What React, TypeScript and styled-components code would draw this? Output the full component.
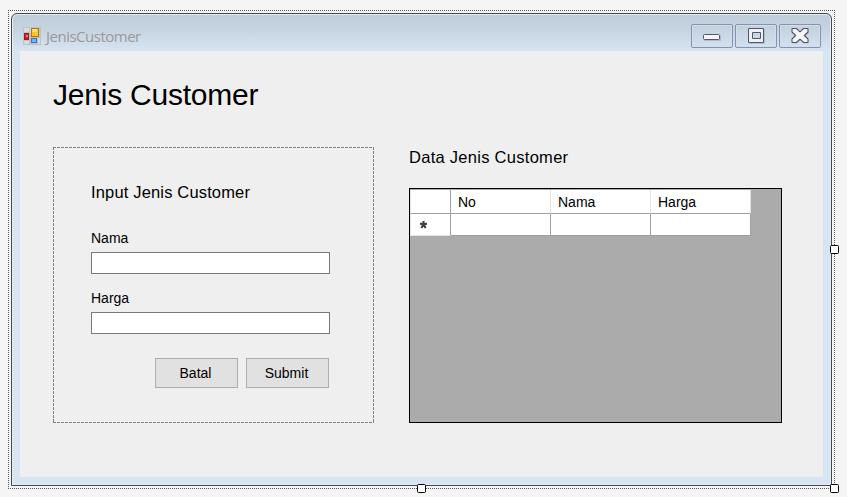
import React from 'react';
import styled, { createGlobalStyle } from 'styled-components';

const GlobalStyle = createGlobalStyle`
  * { box-sizing: border-box; }
  html, body { margin: 0; padding: 0; background: #f5f5f5; overflow: hidden; }
  body { font-family: "Liberation Sans", Arial, sans-serif; color: #000; }
`;

const Canvas = styled.div`
  width: 847px;
  height: 497px;
  padding: 10px 0 0 8px;
  background: #f5f5f5;
`;

const Selection = styled.div`
  position: relative;
  width: 827px;
  height: 479px;
  padding: 2px;
  border: 1px dotted #555;
`;

const Handle = styled.i<{ $x: number; $y: number }>`
  position: absolute;
  left: ${(p) => p.$x}px;
  top: ${(p) => p.$y}px;
  width: 9px;
  height: 9px;
  border: 1px solid #000;
  border-radius: 1.5px;
  background: #fff;
`;

const Window = styled.section`
  display: flex;
  flex-direction: column;
  width: 821px;
  height: 473px;
  padding: 0 8px 8px;
  border: 1px solid #47484a;
  border-radius: 6px 6px 0 0;
  background: linear-gradient(#bfcddb 0, #c6d3e0 16px, #d7e4f2 37px, #d7e4f2 100%);
  box-shadow: inset 0 0 0 1px #e4edf6;
`;

const TitleBar = styled.header`
  display: flex;
  flex: none;
  height: 37px;
  padding-left: 3px;
`;

const AppIcon = styled.svg`
  flex: none;
  width: 18px;
  height: 18px;
  margin-top: 13px;
`;

const WindowTitle = styled.span`
  flex: 1;
  margin: 12px 0 0 5px;
  font: 15px/20px "Open Sans", "Noto Sans", sans-serif;
  letter-spacing: -0.5px;
  color: #999;
`;

const Controls = styled.div`
  display: flex;
  gap: 2px;
  margin: 10px 2px 0 0;
`;

const ControlButton = styled.button`
  display: flex;
  align-items: center;
  justify-content: center;
  width: 42px;
  height: 24px;
  padding: 0;
  border: 1px solid #8692b0;
  border-radius: 2px;
  background: transparent;
  box-shadow: inset 0 0 0 1px #d3deeb;
`;

const Content = styled.main`
  display: flex;
  flex-direction: column;
  height: 426px;
  padding: 26px 0 0 33px;
  background: #efefef;
`;

const Heading = styled.h1`
  margin: 0;
  height: 70px;
  font-size: 30px;
  line-height: 36px;
  font-weight: 400;
  letter-spacing: -0.22px;
`;

const Columns = styled.div`
  display: flex;
  gap: 35px;
`;

const Panel = styled.form`
  width: 321px;
  height: 276px;
  padding: 35px 44px 0 38px;
  background:
    repeating-linear-gradient(90deg, #808080 0 3px, transparent 3px 4px) 0 0 / 100% 1px no-repeat,
    repeating-linear-gradient(90deg, #808080 0 3px, transparent 3px 4px) 0 100% / 100% 1px no-repeat,
    repeating-linear-gradient(#808080 0 3px, transparent 3px 4px) 0 0 / 1px 100% no-repeat,
    repeating-linear-gradient(#808080 0 3px, transparent 3px 4px) 100% 0 / 1px 100% no-repeat;
`;

const Subheading = styled.h2<{ $tracking: number }>`
  margin: 0;
  padding-bottom: 2px;
  font-size: 16.5px;
  line-height: 20px;
  font-weight: 400;
  letter-spacing: ${(p) => p.$tracking}px;
`;

const Field = styled.label<{ $gap: number }>`
  display: block;
  margin-top: ${(p) => p.$gap}px;
  font-size: 14px;
  line-height: 18px;
`;

const TextInput = styled.input`
  display: block;
  width: 239px;
  height: 22px;
  margin-top: 5px;
  padding: 0 3px;
  border: 1px solid #7a7a7a;
  border-radius: 0;
  outline: none;
  background: #fff;
`;

const Actions = styled.div`
  display: flex;
  justify-content: flex-end;
  gap: 8px;
  margin: 24px 1px 0 0;
`;

const ActionButton = styled.button`
  width: 83px;
  height: 30px;
  padding: 0 2px 1px 0;
  border: 1px solid #adadad;
  background: #e1e1e1;
  font: 14px/18px "Liberation Sans", Arial, sans-serif;
  color: #000;
`;

const DataColumn = styled.div`
  width: 373px;
`;

const DataGrid = styled.div`
  height: 235px;
  margin-top: 19px;
  padding: 1px 0 0;
  border: 1px solid #000;
  background: #ababab;
`;

const Table = styled.table`
  width: 341px;
  table-layout: fixed;
  border-collapse: separate;
  border-spacing: 0;
  font-size: 14px;
`;

const HeaderCell = styled.th<{ $corner?: boolean }>`
  width: ${(p) => (p.$corner ? 41 : 100)}px;
  height: 24px;
  padding: 1px 0 0 7px;
  border: solid #a0a0a0;
  border-width: 0 1px 1px ${(p) => (p.$corner ? 1 : 0)}px;
  border-right-color: ${(p) => (p.$corner ? '#a0a0a0' : '#e3e3e3')};
  border-left-color: #e3e3e3;
  background: #fff;
  font-weight: 400;
  line-height: 16px;
  text-align: left;
`;

const Cell = styled.td<{ $marker?: boolean }>`
  height: 22px;
  padding: ${(p) => (p.$marker ? '0 0 0 8px' : '0')};
  border: solid #a0a0a0;
  border-width: 0 1px 1px ${(p) => (p.$marker ? 1 : 0)}px;
  border-left-color: #e3e3e3;
  border-bottom-color: ${(p) => (p.$marker ? '#e3e3e3' : '#a0a0a0')};
  background: #fff;
  line-height: 0;
`;

const FormIcon = () => (
  <AppIcon viewBox="0 0 18 18" shapeRendering="crispEdges">
    <path d="M0 0h18v18H0z" fill="#bfc1c4" />
    <path d="M1 1h5v4H1zM1 14h5v3H1zM7 1h1v5H7zM15 11h2v6h-2z" fill="#d5dce4" />
    <path d="M1 6h5v7H1z" fill="#a51610" />
    <path d="M2 7h3v5H2z" fill="#bf2620" />
    <path d="M3 8h2v2H3z" fill="#e88982" />
    <path d="M8 1h8v9H8z" fill="#aa7c13" />
    <path d="M9 2h6v7H9z" fill="#f5c62d" />
    <path d="M9 2h5v3H9z" fill="#ffdc68" />
    <path d="M8 11h6v5H8z" fill="#3c73c4" />
    <path d="M9 12h4v3H9z" fill="#79b0f2" />
  </AppIcon>
);

const MinimizeIcon = () => (
  <svg width="18" height="18" viewBox="0 0 18 18">
    <rect x="1" y="8" width="17" height="6" rx="1" fill="#8995a7" opacity=".5" />
    <rect x=".5" y="7.5" width="16" height="5" rx="1" fill="#f5f5f5" stroke="#53566b" />
  </svg>
);

const MaximizeIcon = () => (
  <svg width="18" height="18" viewBox="0 0 18 18">
    <path d="M2 2h16v15H2zM6 6v6h7V6z" fill="#8995a7" fillRule="evenodd" opacity=".4" />
    <path d="M1.500 1.500h15v14h-15zM5.500 5.500v6h8v-6z" fill="#f0f0f2" stroke="#53566b" fillRule="evenodd" strokeLinejoin="round" />
  </svg>
);

const CloseIcon = () => (
  <svg width="20" height="18" viewBox="0 0 20 18">
    <path d="M2.500 1.500h3.800L10 4.800l3.700-3.300h3.800l.5.500v3L14.300 8.500 18 12v3l-.5.500h-3.800L10 12.200l-3.700 3.300H2.500L2 15v-3l3.700-3.500L2 5V2z" transform="translate(.5 1)" fill="#8995a7" opacity=".5" />
    <path d="M2.500 1.500h3.800L10 4.800l3.700-3.300h3.800l.5.500v3L14.300 8.500 18 12v3l-.5.500h-3.800L10 12.200l-3.700 3.300H2.500L2 15v-3l3.700-3.500L2 5V2z" fill="#f5f5f5" stroke="#53566b" strokeWidth="1.1" strokeLinejoin="round" />
  </svg>
);

const NewRowMarker = () => (
  <svg width="9" height="9" viewBox="0 0 9 9">
    <path d="M4.500 1v4M1 3.500l3.500 1L8 3.500M2.300 8l2.200-3.500L6.700 8" fill="none" stroke="#404040" strokeWidth="2.2" />
  </svg>
);

const columns = ['No', 'Nama', 'Harga'];

export default function App() {
  return (
    <>
      <GlobalStyle />
      <Canvas>
        <Selection>
          <Window>
            <TitleBar>
              <FormIcon />
              <WindowTitle>JenisCustomer</WindowTitle>
              <Controls>
                <ControlButton aria-label="Minimize"><MinimizeIcon /></ControlButton>
                <ControlButton aria-label="Maximize"><MaximizeIcon /></ControlButton>
                <ControlButton aria-label="Close"><CloseIcon /></ControlButton>
              </Controls>
            </TitleBar>
            <Content>
              <Heading>Jenis Customer</Heading>
              <Columns>
                <Panel onSubmit={(e) => e.preventDefault()}>
                  <Subheading $tracking={0.16}>Input Jenis Customer</Subheading>
                  <Field $gap={25}>Nama<TextInput /></Field>
                  <Field $gap={15}>Harga<TextInput /></Field>
                  <Actions>
                    <ActionButton type="reset">Batal</ActionButton>
                    <ActionButton type="submit">Submit</ActionButton>
                  </Actions>
                </Panel>
                <DataColumn>
                  <Subheading $tracking={0.28}>Data Jenis Customer</Subheading>
                  <DataGrid>
                    <Table>
                      <thead>
                        <tr>
                          <HeaderCell $corner />
                          {columns.map((name) => <HeaderCell key={name}>{name}</HeaderCell>)}
                        </tr>
                      </thead>
                      <tbody>
                        <tr>
                          <Cell $marker><NewRowMarker /></Cell>
                          {columns.map((name) => <Cell key={name} />)}
                        </tr>
                      </tbody>
                    </Table>
                  </DataGrid>
                </DataColumn>
              </Columns>
            </Content>
          </Window>
          <Handle $x={821} $y={234} />
          <Handle $x={408} $y={473} />
          <Handle $x={821} $y={473} />
        </Selection>
      </Canvas>
    </>
  );
}
